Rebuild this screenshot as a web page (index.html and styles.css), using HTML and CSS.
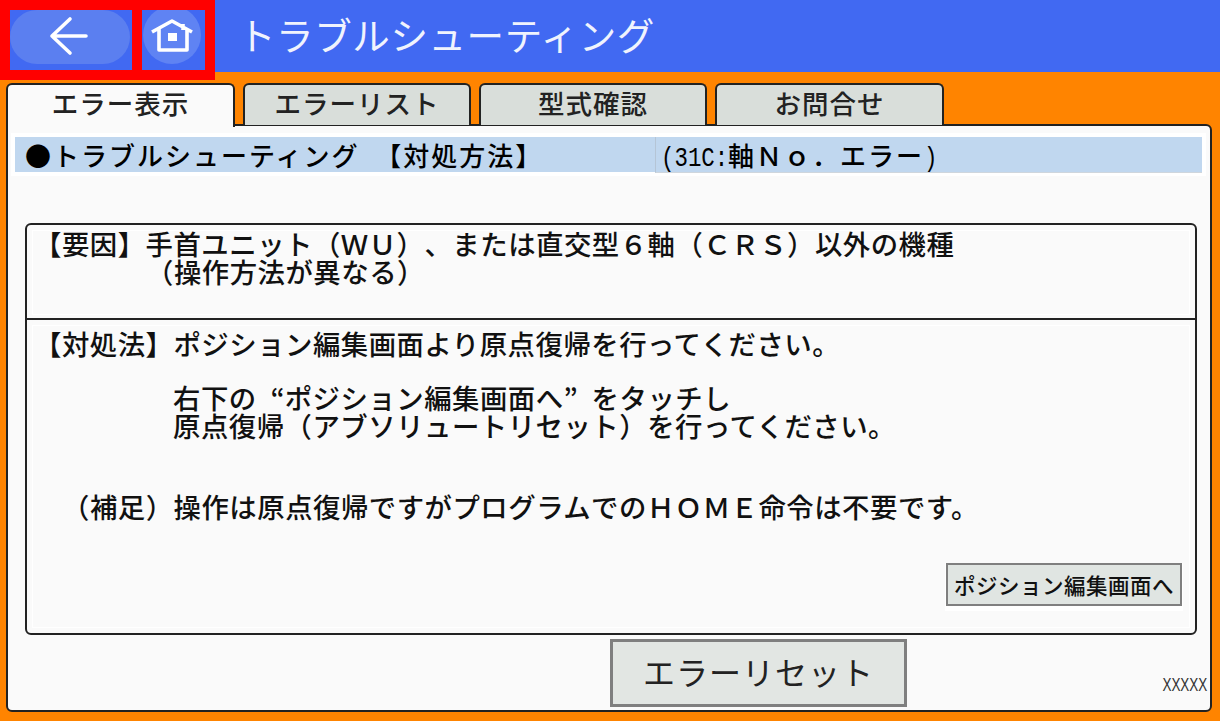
FILE: index.html
```html
<!DOCTYPE html>
<html lang="ja">
<head>
<meta charset="utf-8">
<title>トラブルシューティング</title>
<link rel="stylesheet" href="styles.css">
</head>
<body>
<div class="app">
  <header class="header">
    <nav class="nav">
      <div class="nav-cell nav-back">
        <svg class="icon" width="122" height="60" viewBox="0 0 122 60">
          <rect x="0" y="0" width="120" height="54" rx="27" fill="#5b7ff0"/>
          <path d="M60 9 L42 26 L60 43 M42 26 H76" fill="none" stroke="#fff" stroke-width="3.6" stroke-linecap="round" stroke-linejoin="round"/>
        </svg>
      </div>
      <div class="nav-cell nav-home">
        <svg class="icon" width="63" height="60" viewBox="0 0 63 60">
          <circle cx="30" cy="25" r="29" fill="#5f83f3"/>
          <path d="M10 22 L30 11 L50 22 M17 19 V40 H45 V19 M41 14 V20" fill="none" stroke="#fff" stroke-width="3.6" stroke-linejoin="round"/>
          <rect x="26" y="23" width="9" height="8" fill="#fff"/>
        </svg>
      </div>
    </nav>
    <h1 class="title">トラブルシューティング</h1>
  </header>
  <div class="tabs">
    <div class="tab tab-active">エラー表示</div>
    <div class="tab">エラーリスト</div>
    <div class="tab">型式確認</div>
    <div class="tab">お問合せ</div>
  </div>
  <main class="panel">
    <div class="bar">
      <div class="bar-left">●トラブルシューティング&nbsp;&nbsp;【対処方法】</div>
      <div class="bar-right"><span class="half half-open">(31C:</span>軸Ｎｏ．エラー<span class="half half-close">)</span></div>
    </div>
    <section class="box">
      <div class="cause">
        <p class="line">【要因】手首ユニット（ＷＵ）、または直交型６軸（ＣＲＳ）以外の機種</p>
        <p class="line indent-cause">（操作方法が異なる）</p>
      </div>
      <div class="action">
        <p class="line">【対処法】ポジション編集画面より原点復帰を行ってください。</p>
        <p class="line indent gap-a">右下の<span class="quote quote-open">“</span>ポジション編集画面へ<span class="quote">”</span>をタッチし</p>
        <p class="line indent">原点復帰（アブソリュートリセット）を行ってください。</p>
        <p class="line note">（補足）操作は原点復帰ですがプログラムでのＨＯＭＥ命令は不要です。</p>
        <div class="btn-halo"><button class="btn-small">ポジション編集画面へ</button></div>
      </div>
    </section>
    <div class="footer">
      <button class="btn-reset">エラーリセット</button>
      <span class="code">XXXXX</span>
    </div>
  </main>
</div>
</body>
</html>
```
FILE: styles.css
```css
* { box-sizing: border-box; }
html, body { margin: 0; height: 100%; }
body {
  background: #ff8400;
  font-family: "Noto Sans CJK JP", "Noto Sans", sans-serif;
  color: #111;
  overflow: hidden;
  text-spacing-trim: space-all;
}
.app { width: 1220px; height: 721px; }
.header {
  display: flex;
  height: 72px;
  background: #4169f2;
}
.nav {
  display: flex;
  gap: 10px;
  height: 80px;
  width: 215px;
  flex: none;
  padding: 10px;
  background: #ff0000;
}
.nav-cell { height: 60px; background: #4169f2; overflow: hidden; }
.nav-back { width: 122px; }
.nav-home { width: 63px; }
.icon { display: block; }
.title {
  margin: 0 0 0 23px;
  font-size: 37.5px;
  font-weight: 400;
  letter-spacing: 0.6px;
  line-height: 68px;
  color: #f0f3fd;
  white-space: nowrap;
}
.tabs {
  display: flex;
  gap: 8px;
  margin: 11px 0 0 6px;
  height: 41px;
  position: relative;
  z-index: 1;
}
.tab {
  width: 228px;
  height: 42px;
  background: #d9deda;
  border: 2px solid #222;
  border-bottom: 0;
  border-radius: 6px 6px 0 0;
  font-size: 26.5px;
  letter-spacing: 1px;
  line-height: 35px;
  text-align: center;
  color: #222;
  font-weight: 500;
}
.tab:last-child { width: 229px; }
.tab-active {
  width: 229px;
  height: 44px;
  background: #fafafa;
}
.panel {
  margin: 0 0 0 6px;
  width: 1206px;
  height: 588px;
  background: #fafafa;
  border: 2px solid #222;
  border-radius: 0 6px 6px 6px;
  padding: 11px 8px 0 7px;
}
.bar {
  display: flex;
  height: 35px;
  background: #c0d7ef;
  box-shadow: 0 0 0 4px #fff;
  font-size: 26px;
  font-weight: 500;
  line-height: 35px;
  letter-spacing: 2px;
  white-space: nowrap;
  color: #000;
}
.bar-left { width: 640px; padding-left: 10px; }
.bar-right {
  flex: 1;
  height: 36px;
  padding-left: 5px;
  border-left: 1px solid #b5c5d6;
  border-bottom: 1px solid #cfd6dd;
}
.half {
  display: inline-block;
  font-family: "Liberation Mono", monospace;
  font-size: 28px;
  letter-spacing: 0;
  transform: scaleX(0.8);
  transform-origin: left center;
}
.half-open { width: 67px; }
.half-close { width: 13px; }
.quote {
  display: inline-block;
  width: 28px;
  letter-spacing: 0;
}
.quote-open { text-align: right; }
.box {
  display: flex;
  flex-direction: column;
  margin: 51px 5px 0 10px;
  height: 412px;
  border: 2px solid #222;
  border-radius: 6px;
}
.cause {
  height: 95px;
  padding: 4px 0 0 7px;
  border-bottom: 2px solid #222;
  outline: 1px solid #fff;
  outline-offset: -6px;
}
.action {
  flex: 1;
  display: flex;
  flex-direction: column;
  padding: 9px 12px 22px 7px;
  outline: 1px solid #fff;
  outline-offset: -6px;
}
.line {
  margin: 0;
  font-size: 27.4px;
  font-weight: 500;
  line-height: 28px;
  letter-spacing: 0.5px;
  white-space: nowrap;
  color: #111;
}
.indent-cause { padding-left: 112px; }
.indent { padding-left: 139px; }
.gap-a { margin-top: 26px; }
.note { margin-top: 53px; padding-left: 28px; }
.btn-halo {
  margin-top: auto;
  align-self: flex-end;
  padding: 0 1px 5px;
  background: #fff;
}
.btn-small {
  display: block;
  width: 236px;
  height: 43px;
  padding: 0;
  background: #e0e5e2;
  border: 2px solid #7f7f7f;
  font-family: inherit;
  font-size: 21.5px;
  font-weight: 500;
  letter-spacing: 0.5px;
  color: #111;
  white-space: nowrap;
}
.footer {
  display: grid;
  grid-template-columns: 595px auto 1fr;
  align-items: start;
  margin-top: 4px;
}
.btn-reset {
  grid-column: 2;
  width: 297px;
  height: 68px;
  padding: 0 0 4px;
  background: #e2e6e3;
  border: 3px solid #7f7f7f;
  font-family: inherit;
  font-size: 32px;
  letter-spacing: 1px;
  line-height: 54px;
  color: #222;
  white-space: nowrap;
}
.code {
  justify-self: end;
  display: inline-block;
  margin: 34px -5px 0 0;
  font-family: "Liberation Sans", sans-serif;
  font-size: 19px;
  line-height: 24px;
  color: #333;
  transform: scaleX(0.71);
  transform-origin: right center;
}
```
